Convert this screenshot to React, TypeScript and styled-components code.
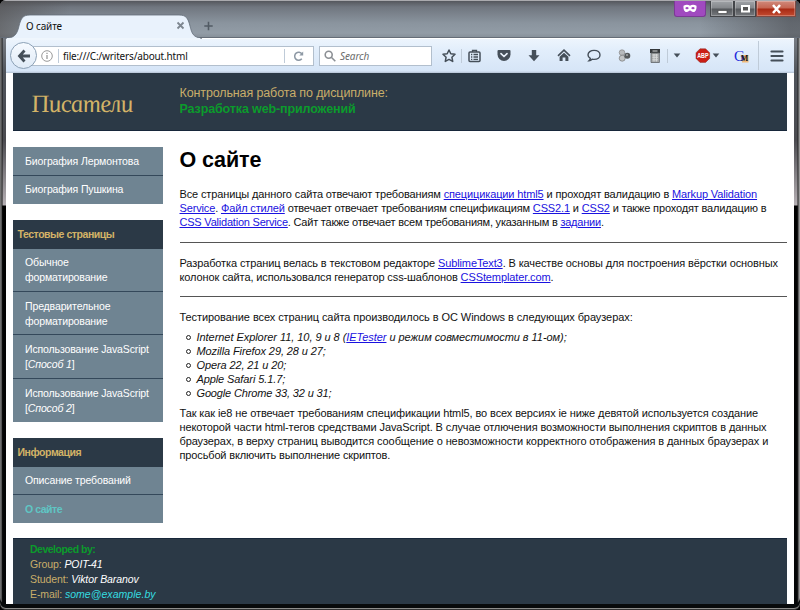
import React from "react";
import styled, { createGlobalStyle } from "styled-components";

const Global = createGlobalStyle`
  *, *::before { box-sizing: border-box; }
  html, body { margin: 0; padding: 0; background: #000; overflow: hidden; }
`;

const Frame = styled.div`
  position: relative;
  width: 800px;
  height: 610px;
  overflow: hidden;
  padding: 0 6px;
  border-radius: 6px;
  font-family: "Liberation Sans", Arial, sans-serif;
  background:
    linear-gradient(90deg, #444 0, #999 1px, #111 2px, transparent 3px, transparent 797px, #222 798px, #999 799px),
    linear-gradient(180deg, #68696f 0, #777c84 38px, #50545a 73px, #4b4b50 140px, #b5afb3 205px, #000 206px, #050607 100%);
  box-shadow: inset 0 -1px 0 #333, inset 0 -2px 0 #8d8d8b, inset 0 -6px 0 #080a0b;
`;

const TitleBar = styled.header`
  display: flex;
  height: 38px;
  margin: 0 -6px;
  border-top: 1px solid #aaaaae;
  background:
    linear-gradient(90deg, rgba(80,78,78,.6) 0, transparent 70px, transparent 700px, rgba(65,66,70,.55) 790px),
    linear-gradient(180deg, #55575d 0, #70767f 6px, #8a949e 22px, #929ca6 32px, #858e97 37px);
  border-bottom: 1px solid #656d78;
`;

const Tab = styled.div`
  position: relative;
  z-index: 1;
  width: 204px;
  height: 38px;
  flex: none;
  display: flex;
  align-items: center;
  padding: 13px 19px 2px 26px;
  font: 10px/14px "Noto Sans", sans-serif;
  letter-spacing: -0.15px;
  color: #111;
`;
const TabShape = styled.svg`
  position: absolute;
  left: 5px;
  top: 13px;
`;
const TabText = styled.span`
  position: relative;
  flex: 1;
`;
const TabClose = styled.svg`
  position: relative;
`;
const NewTab = styled.svg`
  margin-top: 20px;
  flex: none;
`;
const Controls = styled.div`
  display: flex;
  margin-left: auto;
  margin-right: 4px;
  height: 16px;
`;
const Mask = styled.div`
  width: 32px;
  margin-right: 4px;
  display: grid;
  place-items: center;
  background: #a04abf;
  border: 1px solid #7b3a94;
  border-top: 0;
  border-radius: 0 0 3px 3px;
`;
const WinButton = styled.div<{ $w: number; $close?: boolean }>`
  width: ${(p) => p.$w}px;
  display: grid;
  place-items: center;
  border: 1px solid ${(p) => (p.$close ? "#7d4a43" : "#44464a")};
  border-top: 0;
  background: ${(p) =>
    p.$close
      ? "linear-gradient(#d08a7c, #c56551 7px, #a82a14 8px, #c24a30)"
      : "linear-gradient(#a0a3a7, #84878b 7px, #55585c 8px, #777a7e)"};
  box-shadow: inset 0 0 0 1px rgba(255, 255, 255, .25);
`;

const Toolbar = styled.div`
  display: flex;
  align-items: center;
  height: 35px;
  background: linear-gradient(#eef5fd, #e2eefb 12px, #d6e5f7 33px, #b4c2d2);
  box-shadow: inset 0 1px 0 #fff;
`;
const BackButton = styled.div`
  position: relative;
  width: 27px;
  height: 27px;
  margin-left: 4px;
  flex: none;
  display: grid;
  place-items: center;
  border-radius: 50%;
  border: 1px solid #8ba0b5;
  background: linear-gradient(#f6faff, #e0ebf7);
`;
const Address = styled.div`
  display: flex;
  align-items: center;
  width: 284px;
  height: 20px;
  margin-left: -7px;
  padding-left: 10px;
  border: 1px solid #b2bfcd;
  background: #fff;
  font: 10px/18px "Noto Sans", sans-serif;
  letter-spacing: -0.16px;
  color: #111;
`;
const Url = styled.span`
  flex: 1;
  margin-left: 4px;
`;
const Rule = styled.i<{ $ml?: number; $mr?: number; $h?: number }>`
  width: 1px;
  height: ${(p) => p.$h ?? 14}px;
  margin-left: ${(p) => p.$ml ?? 0}px;
  margin-right: ${(p) => p.$mr ?? 0}px;
  background: #bfcbd8;
  flex: none;
`;
const Search = styled.div`
  display: flex;
  align-items: center;
  gap: 4px;
  width: 113px;
  height: 20px;
  margin-left: 5px;
  padding-left: 4px;
  border: 1px solid #b2bfcd;
  background: #fff;
  font: italic 10px/18px "Noto Sans", sans-serif;
  letter-spacing: -0.1px;
  color: #6b6b6b;
`;
const Glyph = styled.svg<{ $ml?: number }>`
  flex: none;
  margin-left: ${(p) => p.$ml ?? 0}px;
`;

const Page = styled.div`
  height: 531px;
  background: #fff;
  padding: 0 7px;
`;
const Banner = styled.div`
  display: flex;
  height: 58px;
  background: #2b3946;
  border-bottom: 1px solid #17273a;
`;
const Logo = styled.div`
  width: 166.5px;
  padding: 15px 0 0 18px;
  font: italic 25px/32px "Liberation Serif", serif;
  color: #d3b367;
  white-space: nowrap;
`;
const LogoText = styled.span<{ $track: number }>`
  display: inline-block;
  transform: skewX(9deg);
  letter-spacing: ${(p) => p.$track}px;
`;
const Subject = styled.div`
  padding-top: 12px;
  font-size: 12.5px;
  line-height: 16px;
  letter-spacing: -0.12px;
  color: #c9ae6a;
`;
const SubjectName = styled.strong`
  display: block;
  color: #0b9b2c;
`;
const Columns = styled.div`
  display: flex;
  gap: 16.5px;
  height: 407px;
  padding-top: 16px;
`;
const Sidebar = styled.nav`
  display: flex;
  flex-direction: column;
  gap: 16px;
  width: 150px;
  flex: none;
`;
const Group = styled.div`
  background: #6f8492;
`;
const GroupTitle = styled.div`
  height: 29px;
  padding-left: 4.5px;
  font-size: 10.5px;
  font-weight: bold;
  line-height: 28px;
  letter-spacing: -0.45px;
  color: #d3b367;
  background: #2b3946;
`;
const Item = styled.div<{ $h: number; $pad?: number; $current?: boolean }>`
  height: ${(p) => p.$h}px;
  padding: ${(p) => p.$pad ?? 7}px 0 0 12px;
  font-size: 10.5px;
  line-height: 15px;
  letter-spacing: ${(p) => (p.$current ? -0.45 : -0.13)}px;
  font-weight: ${(p) => (p.$current ? "bold" : "normal")};
  color: ${(p) => (p.$current ? "#5fc6c4" : "#fff")};
  & + & { border-top: 1px solid #34485a; }
`;
const Article = styled.main`
  flex: 1;
  min-width: 0;
  font-size: 11px;
  line-height: 14px;
  color: #111;
  white-space: nowrap;
`;
const Title = styled.h1`
  margin: 0;
  padding-bottom: 14px;
  font-size: 21.5px;
  line-height: 26px;
  letter-spacing: -0.1px;
  color: #000;
`;
const Para = styled.p`
  margin: 0;
`;
const Line = styled.span<{ $track?: number }>`
  display: block;
  letter-spacing: ${(p) => p.$track ?? -0.1}px;
`;
const Link = styled.a`
  color: #1a12e0;
  text-decoration: underline;
`;
const Divider = styled.hr<{ $before: number }>`
  height: 1px;
  margin: ${(p) => p.$before}px 0 13px;
  border: 0;
  background: #555;
`;
const Browsers = styled.ul`
  margin: 6px 0;
  padding: 0;
  list-style: none;
  font-style: italic;
`;
const Browser = styled.li`
  display: flex;
  align-items: center;
  gap: 6px;
  padding-left: 6px;
  height: 14px;
  &::before {
    content: "";
    width: 5px;
    height: 5px;
    margin-top: 1px;
    border: 1px solid #222;
    border-radius: 50%;
  }
`;
const Footer = styled.footer`
  height: 66px;
  padding: 3px 0 0 17px;
  background: #2b3946;
  font-size: 10.5px;
  line-height: 15px;
  letter-spacing: -0.09px;
  color: #c9ae6a;
  border-top: 1px solid #17273a;
`;
const FooterTitle = styled.strong`
  display: block;
  letter-spacing: -0.5px;
  color: #0b9b2c;
`;
const Value = styled.em<{ $mail?: boolean }>`
  letter-spacing: ${(p) => (p.$mail ? 0.05 : -0.09)}px;
  color: ${(p) => (p.$mail ? "#35dce0" : "#fff")};
`;

const ink = "#454f59";

function ToolbarIcons() {
  return (
    <>
      <Glyph $ml={10} width="14" height="14" viewBox="0 0 14 14" fill="none" stroke={ink} strokeWidth="1.5" strokeLinejoin="round">
        <path d="M7 1l1.800 3.800 4.200.5-3.100 2.900.8 4.200L7 10.400l-3.700 2 .8-4.200L1 5.300l4.200-.5z" />
      </Glyph>
      <Rule $ml={5} $mr={6} />
      <Glyph width="13" height="14" viewBox="0 0 13 14" fill="none" stroke={ink} strokeWidth="1.5">
        <rect x="1" y="3" width="11" height="9.5" rx="1" />
        <path d="M4.500 3V1.500h4V3M3 5.500h1.300M5.500 5.500H10M3 8h1.300M5.500 8H10M3 10.400h1.300M5.500 10.400H10" strokeWidth="1.3" />
      </Glyph>
      <Glyph $ml={16} width="14" height="13" viewBox="0 0 14 13">
        <path d="M1.500 1h11q1 0 1 1v3.500a6.500 6.500 0 0 1-13 0V2q0-1 1-1z" fill={ink} />
        <path d="M4 4.700l3 2.800 3-2.800" fill="none" stroke="#e7f0fa" strokeWidth="1.7" strokeLinecap="round" strokeLinejoin="round" />
      </Glyph>
      <Glyph $ml={17} width="12" height="13" viewBox="0 0 12 13">
        <path d="M3.800 1h4.400v5.300h3.300L6 12.200.5 6.300h3.300z" fill={ink} />
      </Glyph>
      <Glyph $ml={17} width="14" height="13" viewBox="0 0 14 13">
        <path d="M1 6.800L7 1.200l6 5.600" fill="none" stroke={ink} strokeWidth="1.6" />
        <path d="M7 3.700l4.400 4.100V12H8.400V8.600H5.600V12h-3V7.800z" fill={ink} />
      </Glyph>
      <Glyph $ml={16} width="14" height="13" viewBox="0 0 14 13" fill="none" stroke={ink} strokeWidth="1.4">
        <path d="M3.300 9.300C1.800 8.400 1 7.300 1 5.900 1 3.300 3.600 1.400 7.100 1.400S13 3.300 13 5.900s-2.400 4.500-5.900 4.500c-.7 0-1.300 0-2-.2-.8.900-1.800 1.500-3.100 1.500.8-.7 1.200-1.500 1.300-2.400z" />
      </Glyph>
      <Glyph $ml={17} width="13" height="13" viewBox="0 0 13 13">
        <circle cx="4" cy="3.600" r="2.800" fill="#b7babd" stroke="#888" strokeWidth=".7" />
        <circle cx="4.200" cy="9.200" r="3" fill="#c1c4c6" stroke="#777" strokeWidth=".7" />
        <circle cx="9.300" cy="6.800" r="3" fill="#55595c" />
        <circle cx="9" cy="6" r="1" fill="#a4a8aa" />
      </Glyph>
      <Glyph $ml={18} width="12" height="16" viewBox="0 0 12 16">
        <path d="M1 1h10v4H1z" fill="#34383b" />
        <path d="M2 5h8.400v9.500H2z" fill="#a5a8a9" stroke="#606568" strokeWidth=".8" />
        <path d="M3.500 3h5M3.400 7h5.500M3.400 9.300h5.500M3.400 11.800h5.500M5 6v7.500M7.400 6v7.500" stroke="#d7d9da" />
      </Glyph>
      <Rule $ml={6} $mr={5} />
      <Glyph width="8" height="5" viewBox="0 0 8 5"><path d="M.7.5h6.600L4 4.400z" fill={ink} /></Glyph>
      <Glyph $ml={14} width="16" height="15" viewBox="0 0 16 15">
        <path d="M5 .8h5.600l4 4v5.600l-4 4H5L1 10.400V4.800z" fill="#cb1f16" stroke="#8e2e29" strokeWidth=".5" />
        <text x="2.200" y="10" fontFamily="Liberation Sans" fontWeight="bold" fontSize="6.3" fill="#fff" textLength="11.400" lengthAdjust="spacingAndGlyphs">ABP</text>
      </Glyph>
      <Glyph $ml={1} width="8" height="5" viewBox="0 0 8 5"><path d="M.7.5h6.600L4 4.400z" fill={ink} /></Glyph>
      <Glyph $ml={14} width="16" height="16" viewBox="0 0 16 16">
        <path d="M8 7h6.500v7.500H8z" fill="#efb878" />
        <text x="0" y="13" fontFamily="Liberation Serif" fontSize="15" fill="#2027dc">G<tspan dx="-4" fontWeight="bold" fontSize="8" fill="#16171d">M</tspan></text>
      </Glyph>
      <Rule $ml={8} $mr={11} $h={29} />
      <Glyph width="14" height="12" viewBox="0 0 14 12" stroke={ink} strokeWidth="2.2" strokeLinecap="round">
        <path d="M1.500 1.500h11M1.500 6h11M1.500 10.500h11" />
      </Glyph>
    </>
  );
}

export default function App() {
  return (
    <>
      <Global />
      <Frame>
        <TitleBar>
          <Tab>
            <TabShape width="199" height="26" viewBox="0 0 199 26">
              <path d="M0 24.500C9 24 12 21 14 12 16 4 18 1 25 1h149c7 0 9 3 11 11 2 8 3 11 12 12.500" fill="#e9f2fc" stroke="#636d78" strokeWidth=".8" />
              <path d="M2 25h193" stroke="#eff6fd" strokeWidth="1.8" />
            </TabShape>
            <TabText>О сайте</TabText>
            <TabClose width="9" height="9" viewBox="0 0 9 9" stroke="#7e8790" strokeWidth="1.8"><path d="M1.500 1.500l6 6M7.500 1.500l-6 6" /></TabClose>
          </Tab>
          <NewTab width="9" height="10" viewBox="0 0 9 10" stroke="#525b64" strokeWidth="1.6"><path d="M4.500.7v8.600M.3 5h8.400" /></NewTab>
          <Controls>
            <Mask>
              <svg width="14" height="9" viewBox="0 0 14 9">
                <path d="M.5 1.700C3 .3 5.200.5 7 1.700 8.800.5 11 .3 13.500 1.700c.3 4-1 6.300-3.200 6.300C8.700 8 8 6.500 7 6.500S5.300 8 3.700 8C1.500 8 .2 5.700.5 1.700z" fill="#fff" />
                <ellipse cx="4" cy="4.200" rx="1.600" ry="1.100" fill="#a04abf" /><ellipse cx="10" cy="4.200" rx="1.600" ry="1.100" fill="#a04abf" />
              </svg>
            </Mask>
            <WinButton $w={24}><svg width="11" height="12"><path d="M1 7.500h9v3H1z" fill="#fff" stroke="#484848" strokeWidth=".7" /></svg></WinButton>
            <WinButton $w={22}><svg width="11" height="10"><path d="M2 2h7v5.500H2z" fill="#555" stroke="#fff" strokeWidth="2" /></svg></WinButton>
            <WinButton $w={40} $close><svg width="11" height="10"><path d="M2 1l7 8M9 1L2 9" stroke="#fff" strokeWidth="2.500" /></svg></WinButton>
          </Controls>
        </TitleBar>
        <Toolbar>
          <BackButton>
            <svg width="14" height="14" viewBox="0 0 14 14" fill="none" stroke="#454f59" strokeWidth="2.800"><path d="M7.500 1.500L2.500 7l5 5.500M3 7h10" /></svg>
          </BackButton>
          <Address>
            <svg width="12" height="12" viewBox="0 0 12 12" fill="none" stroke="#999"><circle cx="6" cy="6" r="5.300" /><path d="M6 5v4M6 2.700v1.300" strokeWidth="1.300" /></svg>
            <Rule $ml={5} />
            <Url>file:///C:/writers/about.html</Url>
            <Rule $mr={9} />
            <svg width="10" height="10" viewBox="0 0 10 10" fill="none" stroke="#8d98a4" strokeWidth="1.500"><path d="M7.800 7.800A4 4 0 1 1 8 3" /><path d="M9.200.5v4H5.300z" fill="#8d98a4" stroke="none" /></svg>
            <Rule $ml={8} $h={0} />
          </Address>
          <Search>
            <svg width="12" height="12" viewBox="0 0 12 12" fill="none" stroke="#8b8f94" strokeWidth="1.600"><circle cx="4.700" cy="4.700" r="3.500" /><path d="M7.300 7.300l4 4" /></svg>
            Search
          </Search>
          <ToolbarIcons />
        </Toolbar>
        <Page>
          <Banner>
            <Logo><LogoText $track={-0.5}>Писатели</LogoText></Logo>
            <Subject>
              Контрольная работа по дисциплине:
              <SubjectName>Разработка web-приложений</SubjectName>
            </Subject>
          </Banner>
          <Columns>
            <Sidebar>
              <Group>
                <Item $h={28}>Биография Лермонтова</Item>
                <Item $h={29} $pad={6}>Биография Пушкина</Item>
              </Group>
              <Group>
                <GroupTitle>Тестовые страницы</GroupTitle>
                <Item $h={42} $pad={6}>Обычное<br />форматирование</Item>
                <Item $h={43}>Предварительное<br />форматирование</Item>
                <Item $h={44}>Использование JavaScript<br />[<em>Способ 1</em>]</Item>
                <Item $h={44}>Использование JavaScript<br />[<em>Способ 2</em>]</Item>
              </Group>
              <Group>
                <GroupTitle>Информация</GroupTitle>
                <Item $h={27} $pad={6}>Описание требований</Item>
                <Item $h={29} $current>О сайте</Item>
              </Group>
            </Sidebar>
            <Article>
              <Title>О сайте</Title>
              <Para>
                <Line $track={-0.13}>Все страницы данного сайта отвечают требованиям <Link>специцикации html5</Link> и проходят валидацию в <Link>Markup Validation</Link></Line>
                <Line $track={-0.15}><Link>Service</Link>. <Link>Файл стилей</Link> отвечает отвечает требованиям спецификациям <Link>CSS2.1</Link> и <Link>CSS2</Link> и также проходят валидацию в</Line>
                <Line $track={-0.21}><Link>CSS Validation Service</Link>. Сайт также отвечает всем требованиям, указанным в <Link>задании</Link>.</Line>
              </Para>
              <Divider $before={13} />
              <Para>
                <Line $track={-0.115}>Разработка страниц велась в текстовом редакторе <Link>SublimeText3</Link>. В качестве основы для построения вёрстки основных</Line>
                <Line $track={-0.11}>колонок сайта, использовался генератор css-шаблонов <Link>CSStemplater.com</Link>.</Line>
              </Para>
              <Divider $before={12} />
              <Para><Line $track={-0.075}>Тестирование всех страниц сайта производилось в ОС Windows в следующих браузерах:</Line></Para>
              <Browsers>
                <Browser><Line $track={-0.05}>Internet Explorer 11, 10, 9 и 8 (<Link>IETester</Link> и режим совместимости в 11-ом);</Line></Browser>
                <Browser><Line>Mozilla Firefox 29, 28 и 27;</Line></Browser>
                <Browser><Line $track={-0.12}>Opera 22, 21 и 20;</Line></Browser>
                <Browser><Line>Apple Safari 5.1.7;</Line></Browser>
                <Browser><Line $track={-0.15}>Google Chrome 33, 32 и 31;</Line></Browser>
              </Browsers>
              <Para>
                <Line>Так как ie8 не отвечает требованиям спецификации html5, во всех версиях ie ниже девятой используется создание</Line>
                <Line $track={-0.115}>некоторой части html-тегов средствами JavaScript. В случае отлючения возможности выполнения скриптов в данных</Line>
                <Line>браузерах, в верху страниц выводится сообщение о невозможности корректного отображения в данных браузерах и</Line>
                <Line $track={-0.14}>просьбой включить выполнение скриптов.</Line>
              </Para>
            </Article>
          </Columns>
          <Footer>
            <FooterTitle>Developed by:</FooterTitle>
            <div>Group: <Value>POIT-41</Value></div>
            <div>Student: <Value>Viktor Baranov</Value></div>
            <div>E-mail: <Value $mail>some@example.by</Value></div>
          </Footer>
        </Page>
      </Frame>
    </>
  );
}
